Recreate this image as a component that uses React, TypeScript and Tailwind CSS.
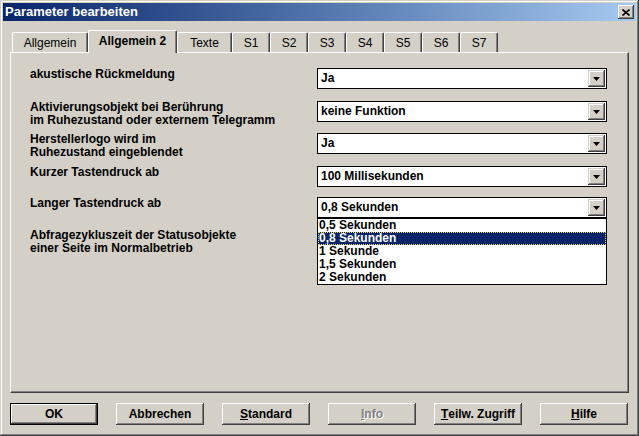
const FACE = 'bg-[#d4d0c8]';
const RAISED =
  'shadow-[inset_-1px_-1px_#404040,inset_1px_1px_#ffffff,inset_-2px_-2px_#808080,inset_2px_2px_#d4d0c8]';
const COMBO_BTN =
  'shadow-[inset_-1px_-1px_#404040,inset_1px_1px_#d4d0c8,inset_-2px_-2px_#808080,inset_2px_2px_#ffffff]';

const TABS = [
  { label: 'Allgemein', w: 'w-[76px]' },
  { label: 'Allgemein 2', w: 'w-[89px]', active: true },
  { label: 'Texte', w: 'w-[55px]' },
  { label: 'S1', w: 'w-[38px]' },
  { label: 'S2', w: 'w-[38px]' },
  { label: 'S3', w: 'w-[38px]' },
  { label: 'S4', w: 'w-[38px]' },
  { label: 'S5', w: 'w-[38px]' },
  { label: 'S6', w: 'w-[38px]' },
  { label: 'S7', w: 'w-[38px]' },
];

interface Row {
  label: string[];
  value?: string;
  h: string;
  open?: boolean;
}

// last row's combo is hidden behind the open list, so it has no value here
const ROWS: Row[] = [
  { label: ['akustische Rückmeldung'], value: 'Ja', h: 'h-[33px]' },
  {
    label: ['Aktivierungsobjekt bei Berührung', 'im Ruhezustand oder externem Telegramm'],
    value: 'keine Funktion',
    h: 'h-[32px]',
  },
  { label: ['Herstellerlogo wird im', 'Ruhezustand eingeblendet'], value: 'Ja', h: 'h-[33px]' },
  { label: ['Kurzer Tastendruck ab'], value: '100 Millisekunden', h: 'h-[31px]' },
  { label: ['Langer Tastendruck ab'], value: '0,8 Sekunden', h: 'h-[32px]', open: true },
  { label: ['Abfragezykluszeit der Statusobjekte', 'einer Seite im Normalbetrieb'], h: 'h-[32px]' },
];

const OPTIONS = ['0,5 Sekunden', '0,8 Sekunden', '1 Sekunde', '1,5 Sekunden', '2 Sekunden'];

function Arrow() {
  return (
    <svg width="7" height="4" viewBox="0 0 7 4">
      <path d="M0 0h7L3.5 4z" fill="#000" />
    </svg>
  );
}

function Combo({ value, open }: { value: string; open?: boolean }) {
  return (
    <div className="relative w-[290px] h-[21px] border border-black bg-white p-[1px] flex items-center">
      <span className="flex-1 pl-[2px] text-[12px] font-bold leading-[17px] text-black">{value}</span>
      <div className={`w-[17px] h-[17px] ${FACE} ${COMBO_BTN} flex items-center justify-center`}>
        <Arrow />
      </div>
      {open && (
        <div className="absolute left-[-1px] top-[20px] w-[290px] border border-black bg-white z-20">
          {OPTIONS.map((o) => (
            <div
              key={o}
              className={`h-[13px] leading-[13px] pl-[1px] text-[12px] font-bold ${
                o === value
                  ? 'bg-[#0a246a] text-white outline-1 outline-dotted outline-[#e8d870] -outline-offset-1'
                  : 'text-black'
              }`}
            >
              {o}
            </div>
          ))}
        </div>
      )}
    </div>
  );
}

function Button({ children, isDefault, disabled }: { children: React.ReactNode; isDefault?: boolean; disabled?: boolean }) {
  return (
    <div
      className={`w-[88px] h-[22px] ${FACE} flex items-center justify-center text-[12px] font-bold ${
        isDefault
          ? 'border border-black shadow-[inset_-1px_-1px_#404040,inset_1px_1px_#ffffff,inset_-2px_-2px_#808080]'
          : RAISED
      } ${disabled ? 'text-[#808080] [text-shadow:1px_1px_0_#ffffff]' : 'text-black'}`}
    >
      {children}
    </div>
  );
}

export default function App() {
  return (
    <div
      className={`w-[639px] h-[436px] ${FACE} p-[3px] flex flex-col shadow-[inset_-1px_-1px_#404040,inset_1px_1px_#d4d0c8,inset_-2px_-2px_#808080,inset_2px_2px_#ffffff]`}
      style={{ fontFamily: '"Liberation Sans", Arial, sans-serif' }}
    >
      {/* Title bar */}
      <div className="h-[18px] flex items-center justify-between pl-[2px] pr-[2px] bg-gradient-to-r from-[#0a246a] to-[#a6caf0]">
        <span className="text-white text-[13px] font-bold leading-[18px]">Parameter bearbeiten</span>
        <div className={`w-[16px] h-[14px] ${FACE} ${RAISED} flex items-center justify-center`}>
          <svg width="8" height="7" viewBox="0 0 8 7">
            <path d="M0.5 0.5L7.5 6.5M7.5 0.5L0.5 6.5" stroke="#000" strokeWidth="1.6" />
          </svg>
        </div>
      </div>

      <div className="px-[7px] pt-[9px]">
        {/* Tabs */}
        <div className="h-[22px] flex items-end pl-[2px]">
          {TABS.map((t) =>
            t.active ? (
              <div
                key={t.label}
                className={`${t.w} h-[23px] -mb-[1px] relative z-10 ${FACE} border-t border-l border-white border-r border-r-[#404040] shadow-[inset_-1px_0_#808080] rounded-tl-[2px] rounded-tr-[2px] flex items-center justify-center pb-[2px] text-[12px] font-bold text-black`}
              >
                {t.label}
              </div>
            ) : (
              <div
                key={t.label}
                className={`${t.w} h-[20px] ${FACE} border-t border-l border-white border-r border-r-[#404040] shadow-[inset_-1px_0_#808080] rounded-tl-[2px] rounded-tr-[2px] flex items-center justify-center text-[12px] text-black`}
              >
                {t.label}
              </div>
            ),
          )}
        </div>

        {/* Panel */}
        <div className="w-[619px] h-[341px] border-t border-l border-white border-r border-b border-r-[#404040] border-b-[#404040] shadow-[inset_-1px_-1px_#808080] pl-[19px] pt-[15px]">
          {ROWS.map((r, i) => (
            <div key={i} className={`${r.h} flex items-start`}>
              <div className="w-[287px] text-[12px] font-bold leading-[13px] text-black">
                {r.label.map((l) => (
                  <div key={l}>{l}</div>
                ))}
              </div>
              {r.value && <Combo value={r.value} open={r.open} />}
            </div>
          ))}
        </div>

        {/* Buttons */}
        <div className="mt-[10px] flex gap-[18px]">
          <Button isDefault>OK</Button>
          <Button>Abbrechen</Button>
          <Button>
            <span className="underline">S</span>tandard
          </Button>
          <Button disabled>
            <span className="underline">I</span>nfo
          </Button>
          <Button>
            <span className="underline">T</span>eilw. Zugriff
          </Button>
          <Button>
            <span className="underline">H</span>ilfe
          </Button>
        </div>
      </div>
    </div>
  );
}
